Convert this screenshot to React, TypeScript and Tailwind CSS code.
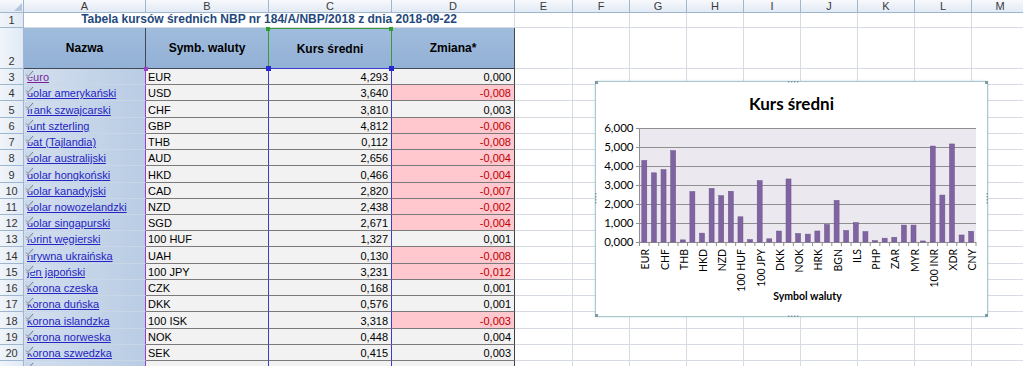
import React from "react";

type Row = {
  n: number;
  h: string;
  name: string;
  sym: string;
  kurs: string;
  zm: string;
  red: boolean;
  visited?: boolean;
};

const rows: Row[] = [
  { n: 3, h: "h-[16px]", name: "euro", sym: "EUR", kurs: "4,293", zm: "0,000", red: false, visited: true },
  { n: 4, h: "h-[16px]", name: "dolar amerykański", sym: "USD", kurs: "3,640", zm: "-0,008", red: true },
  { n: 5, h: "h-[17px]", name: "frank szwajcarski", sym: "CHF", kurs: "3,810", zm: "0,003", red: false },
  { n: 6, h: "h-[16px]", name: "funt szterling", sym: "GBP", kurs: "4,812", zm: "-0,006", red: true },
  { n: 7, h: "h-[16px]", name: "bat (Tajlandia)", sym: "THB", kurs: "0,112", zm: "-0,008", red: true },
  { n: 8, h: "h-[16px]", name: "dolar australijski", sym: "AUD", kurs: "2,656", zm: "-0,004", red: true },
  { n: 9, h: "h-[17px]", name: "dolar hongkoński", sym: "HKD", kurs: "0,466", zm: "-0,004", red: true },
  { n: 10, h: "h-[16px]", name: "dolar kanadyjski", sym: "CAD", kurs: "2,820", zm: "-0,007", red: true },
  { n: 11, h: "h-[16px]", name: "dolar nowozelandzki", sym: "NZD", kurs: "2,438", zm: "-0,002", red: true },
  { n: 12, h: "h-[16px]", name: "dolar singapurski", sym: "SGD", kurs: "2,671", zm: "-0,004", red: true },
  { n: 13, h: "h-[16px]", name: "forint węgierski", sym: "100 HUF", kurs: "1,327", zm: "0,001", red: false },
  { n: 14, h: "h-[17px]", name: "hrywna ukraińska", sym: "UAH", kurs: "0,130", zm: "-0,008", red: true },
  { n: 15, h: "h-[16px]", name: "jen japoński", sym: "100 JPY", kurs: "3,231", zm: "-0,012", red: true },
  { n: 16, h: "h-[16px]", name: "korona czeska", sym: "CZK", kurs: "0,168", zm: "0,001", red: false },
  { n: 17, h: "h-[16px]", name: "korona duńska", sym: "DKK", kurs: "0,576", zm: "0,001", red: false },
  { n: 18, h: "h-[17px]", name: "korona islandzka", sym: "100 ISK", kurs: "3,318", zm: "-0,003", red: true },
  { n: 19, h: "h-[16px]", name: "korona norweska", sym: "NOK", kurs: "0,448", zm: "0,004", red: false },
  { n: 20, h: "h-[16px]", name: "korona szwedzka", sym: "SEK", kurs: "0,415", zm: "0,003", red: false },
];

const GRID =
  "grid grid-cols-[24px_122px_123px_123px_123px_58px_57px_57px_57px_57px_57px_57px_57px_57px]";

const colLetters = ["A", "B", "C", "D", "E", "F", "G", "H", "I", "J", "K", "L", "M"];

function EmptyCells() {
  return (
    <>
      {Array.from({ length: 9 }).map((_, i) => (
        <div key={i} className="border-r border-b border-[#d5dae3] bg-white" />
      ))}
    </>
  );
}

function RowHead({ n }: { n?: number }) {
  return (
    <div className="flex items-end justify-center border-r border-b border-[#9eb6ce] bg-gradient-to-r from-[#f1f5fb] to-[#e0e9f5] text-[11px] leading-[13px] text-[#333]">
      {n}
    </div>
  );
}

function LinkIcon() {
  return (
    <span className="absolute left-[1px] top-[1px] block h-[7px] w-[9px] bg-[#c9d7ea]">
      <svg width="9" height="8" viewBox="0 0 9 8" className="block">
        <path d="M1 4.5 L3 6.5 L8 1" fill="none" stroke="#7b7f88" strokeWidth="1" />
        <path d="M1 7.5 L6 7.5" fill="none" stroke="#a0a6b0" strokeWidth="0.8" />
      </svg>
    </span>
  );
}

const CATS = [
  "EUR", "USD", "CHF", "GBP", "THB", "AUD", "HKD", "CAD", "NZD", "SGD",
  "100 HUF", "UAH", "100 JPY", "CZK", "DKK", "100 ISK", "NOK", "SEK", "HRK", "RON",
  "BGN", "TRY", "ILS", "100 CLP", "PHP", "MXN", "ZAR", "BRL", "MYR", "RUB",
  "100 INR", "100 IDR", "XDR", "100 KRW", "CNY",
];
const VALS = [
  4.293, 3.64, 3.81, 4.812, 0.112, 2.656, 0.466, 2.82, 2.438, 2.671,
  1.327, 0.13, 3.231, 0.168, 0.576, 3.318, 0.448, 0.415, 0.58, 0.92,
  2.19, 0.61, 1.02, 0.55, 0.07, 0.2, 0.25, 0.89, 0.89, 0.055,
  5.05, 2.47, 5.16, 0.37, 0.565,
];

function Chart() {
  const L = 44.5;
  const T = 47;
  const R = 381;
  const B = 161;
  const w = (R - L) / 35;
  const unit = (B - T) / 6;
  const yl = ["6,000", "5,000", "4,000", "3,000", "2,000", "1,000", "0,000"];
  return (
    <div className="absolute left-[595px] top-[81px] h-[236px] w-[393px] rounded-[2px] border border-[#a9c8cf] bg-white shadow-[0_0_2px_rgba(120,160,170,0.5)]">
      <svg width="393" height="236" viewBox="0 0 393 236" className="absolute left-[-1px] top-[-1px]">
        <text x="196.5" y="28.5" textAnchor="middle" fontFamily="Lato, 'Open Sans', sans-serif" fontWeight="700" fontSize="17" fill="#000">
          Kurs średni
        </text>
        <rect x={L} y={T} width={R - L} height={B - T} fill="#ebe8f0" />
        {yl.map((t, i) => (
          <g key={t}>
            <line x1={L - 4} x2={R} y1={T + i * unit} y2={T + i * unit} stroke="#8f8f8f" strokeWidth="1" shapeRendering="crispEdges" />
            <text x={38.5} y={T + i * unit + 4} textAnchor="end" fontFamily="Lato, 'Open Sans', sans-serif" fontSize="11.5" fill="#000">
              {t}
            </text>
          </g>
        ))}
        <line x1={L} x2={L} y1={T} y2={B} stroke="#8f8f8f" strokeWidth="1" shapeRendering="crispEdges" />
        {VALS.map((v, i) => {
          const cx = L + (i + 0.5) * w;
          const hh = v * unit;
          return (
            <rect key={i} x={cx - 2.5} y={B - hh} width={5} height={hh} fill="#8064a2" stroke="#6a5288" strokeWidth="0.5" />
          );
        })}
        {Array.from({ length: 36 }).map((_, i) => (
          <line key={i} x1={L + i * w} x2={L + i * w} y1={B} y2={B + 4} stroke="#8f8f8f" strokeWidth="1" />
        ))}
        {CATS.map((c, i) =>
          i % 2 === 0 ? (
            <text
              key={c}
              transform={`translate(${L + (i + 0.5) * w + 5}, 168) rotate(-90)`}
              textAnchor="end"
              fontFamily="Lato, 'Open Sans', sans-serif"
              fontSize="10.5"
              fill="#000"
            >
              {c}
            </text>
          ) : null
        )}
        <text x="212.5" y="219" textAnchor="middle" fontFamily="Lato, 'Open Sans', sans-serif" fontWeight="700" fontSize="10.5" fill="#000">
          Symbol waluty
        </text>
        <g fill="#7d9aa5">
          {[0, 3, 6, 9].map((d) => (
            <rect key={"t" + d} x={193 + d} y={0} width={1.5} height={1.5} />
          ))}
          {[0, 3, 6, 9].map((d) => (
            <rect key={"b" + d} x={193 + d} y={234.5} width={1.5} height={1.5} />
          ))}
          {[0, 3, 6, 9].map((d) => (
            <rect key={"l" + d} x={0} y={112 + d} width={1.5} height={1.5} />
          ))}
          {[0, 3, 6, 9].map((d) => (
            <rect key={"r" + d} x={391.5} y={112 + d} width={1.5} height={1.5} />
          ))}
          <rect x={0} y={0} width={3} height={3} />
          <rect x={390} y={0} width={3} height={3} />
          <rect x={0} y={233} width={3} height={3} />
          <rect x={390} y={233} width={3} height={3} />
        </g>
      </svg>
    </div>
  );
}

export default function App() {
  return (
    <div className="relative h-[366px] w-[1023px] overflow-hidden bg-white font-['Liberation_Sans',Arial,sans-serif] text-[11px] text-black">
      {/* column headers */}
      <div className={`${GRID} h-[13px]`}>
        <div className="relative border-r border-b border-[#9eb6ce] bg-gradient-to-b from-[#f7f9fc] to-[#e2eaf5]">
          <svg width="8" height="8" className="absolute bottom-[1px] right-[1px]">
            <polygon points="8,0 8,8 0,8" fill="#b6c7db" />
          </svg>
        </div>
        {colLetters.map((c) => (
          <div
            key={c}
            className="flex items-center justify-center border-r border-b border-[#9eb6ce] bg-gradient-to-b from-[#f7f9fc] to-[#e2eaf5] text-[11px] leading-[12px] text-[#3a3a3a]"
          >
            {c}
          </div>
        ))}
      </div>

      {/* row 1 */}
      <div className={`${GRID} h-[15px]`}>
        <RowHead n={1} />
        <div className="col-span-4 flex items-end justify-center border-r border-b border-[#d5dae3] bg-white pb-[1px] text-[12px] font-bold leading-[13px] text-[#1f497d]">
          Tabela kursów średnich NBP nr 184/A/NBP/2018 z dnia 2018-09-22
        </div>
        <EmptyCells />
      </div>

      {/* row 2 */}
      <div className={`${GRID} h-[41px]`}>
        <RowHead n={2} />
        <div className="flex items-center justify-center border-r border-b border-[#404a57] bg-gradient-to-b from-[#a0bcdd] to-[#93b1d6] text-[12px] font-bold">
          Nazwa
        </div>
        <div className="flex items-center justify-center border-r border-b border-r-[#3a9a3a] border-b-[#404a57] bg-gradient-to-b from-[#a0bcdd] to-[#93b1d6] text-[12px] font-bold">
          Symb. waluty
        </div>
        <div className="relative flex items-center justify-center border-t border-r border-b border-t-[#3a9a3a] border-r-[#3a9a3a] border-b-[#3b3bd0] bg-gradient-to-b from-[#a0bcdd] to-[#93b1d6] text-[12px] font-bold">
          Kurs średni
          <span className="absolute left-[-3px] top-[-2px] h-[4px] w-[4px] bg-[#2e9e2e]" />
          <span className="absolute right-[-2px] top-[-2px] h-[4px] w-[4px] bg-[#2e9e2e]" />
          <span className="absolute bottom-[-3px] left-[-3px] h-[5px] w-[5px] bg-[#2727d8]" />
          <span className="absolute bottom-[-3px] right-[-3px] h-[5px] w-[5px] bg-[#2727d8]" />
        </div>
        <div className="flex items-center justify-center border-r border-b border-[#404a57] bg-gradient-to-b from-[#a0bcdd] to-[#93b1d6] text-[12px] font-bold">
          Zmiana*
        </div>
        <EmptyCells />
      </div>

      {/* data rows */}
      {rows.map((r, idx) => (
        <div key={r.n} className={`${GRID} ${r.h}`}>
          <RowHead n={r.n} />
          <div className="relative flex items-end border-r border-b border-r-[#9a40c8] border-b-[#c9d6e8] bg-gradient-to-r from-[#d3dfee] to-[#b9cce4] pl-[3px] leading-[13px]">
            <span className={`underline ${r.visited ? "text-[#7a1f9a]" : "text-[#2424c4]"}`}>{r.name}</span>
            <LinkIcon />
            {idx === 0 ? <span className="absolute right-[-3px] top-[-2px] h-[4px] w-[4px] bg-[#9a40c8]" /> : null}
          </div>
          <div className="flex items-end border-r border-b border-r-[#3b3bd0] border-b-[#7a7a7a] bg-[#f2f2f2] pl-[2px] leading-[13px]">
            {r.sym}
          </div>
          <div className="flex items-end justify-end border-r border-b border-r-[#3b3bd0] border-b-[#7a7a7a] bg-[#f2f2f2] pr-[3px] leading-[13px]">
            {r.kurs}
          </div>
          <div
            className={`flex items-end justify-end border-r border-b border-r-[#404040] border-b-[#7a7a7a] pr-[3px] leading-[13px] ${
              r.red ? "bg-[#ffc7ce] text-[#c00000]" : "bg-[#f2f2f2]"
            }`}
          >
            {r.zm}
          </div>
          <EmptyCells />
        </div>
      ))}

      {/* row 21 (partial, number hidden below the edge) */}
      <div className={`${GRID} h-[16px]`}>
        <RowHead />
        <div className="relative border-r border-b border-r-[#9a40c8] border-b-[#c9d6e8] bg-gradient-to-r from-[#d3dfee] to-[#b9cce4]">
          <LinkIcon />
        </div>
        <div className="border-r border-b border-r-[#3b3bd0] border-b-[#7a7a7a] bg-[#f2f2f2]" />
        <div className="border-r border-b border-r-[#3b3bd0] border-b-[#7a7a7a] bg-[#f2f2f2]" />
        <div className="border-r border-b border-r-[#404040] border-b-[#7a7a7a] bg-[#f2f2f2]" />
        <EmptyCells />
      </div>

      <Chart />
    </div>
  );
}
